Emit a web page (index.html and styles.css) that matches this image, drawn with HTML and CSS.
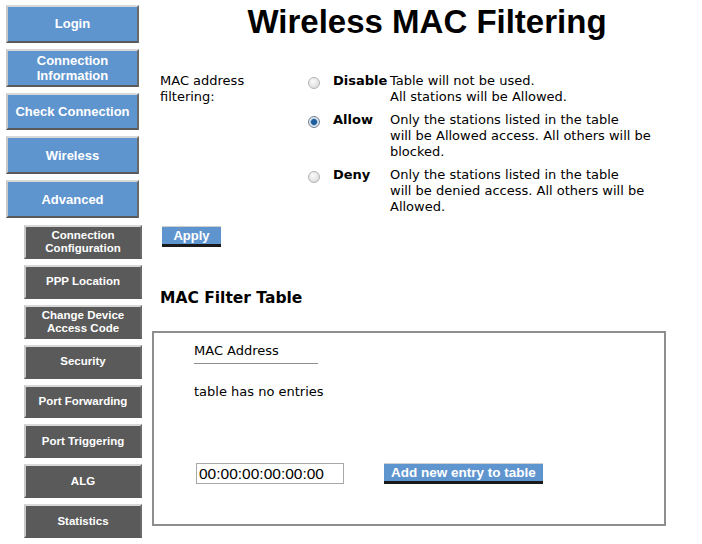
FILE: index.html
```html
<!DOCTYPE html>
<html>
<head>
<meta charset="utf-8">
<link rel="stylesheet" href="styles.css">
</head>
<body>
<div class="page">
  <nav class="sidebar">
    <a class="nav-main">Login</a>
    <a class="nav-main">Connection<br>Information</a>
    <a class="nav-main">Check Connection</a>
    <a class="nav-main">Wireless</a>
    <a class="nav-main">Advanced</a>
    <a class="nav-sub">Connection<br>Configuration</a>
    <a class="nav-sub">PPP Location</a>
    <a class="nav-sub">Change Device<br>Access Code</a>
    <a class="nav-sub">Security</a>
    <a class="nav-sub">Port Forwarding</a>
    <a class="nav-sub">Port Triggering</a>
    <a class="nav-sub">ALG</a>
    <a class="nav-sub">Statistics</a>
  </nav>
  <main class="content">
    <h1 class="title">Wireless MAC Filtering</h1>
    <div class="filter-form">
      <div class="field-label">MAC address<br>filtering:</div>
      <span class="radio"></span>
      <span class="opt-label">Disable</span>
      <div class="opt-desc">Table will not be used.<br>All stations will be Allowed.</div>

      <span class="radio checked"></span>
      <span class="opt-label">Allow</span>
      <div class="opt-desc">Only the stations listed in the table<br>will be Allowed access. All others will be<br>blocked.</div>

      <span class="radio"></span>
      <span class="opt-label">Deny</span>
      <div class="opt-desc">Only the stations listed in the table<br>will be denied access. All others will be<br>Allowed.</div>
    </div>
    <button class="btn btn-apply">Apply</button>
    <h2 class="section-title">MAC Filter Table</h2>
    <div class="table-box">
      <div class="col-head">MAC Address</div>
      <div class="empty">table has no entries</div>
      <div class="add-row">
        <input class="mac-input" type="text" value="00:00:00:00:00:00">
        <button class="btn btn-add">Add new entry to table</button>
      </div>
    </div>
  </main>
</div>
</body>
</html>
```

FILE: styles.css
```css
html, body {
  margin: 0;
  padding: 0;
  background: #fff;
}
body {
  font-family: "DejaVu Sans", Verdana, sans-serif;
  font-size: 13px;
  color: #000;
}
.page {
  display: flex;
  width: 702px;
  height: 544px;
  overflow: hidden;
}
.sidebar {
  width: 152px;
  flex: none;
  display: flex;
  flex-direction: column;
  padding: 5px 0 0 6px;
  box-sizing: border-box;
}
.nav-main, .nav-sub {
  display: flex;
  align-items: center;
  justify-content: center;
  text-align: center;
  color: #fff;
  font-family: "Liberation Sans", Arial, sans-serif;
  font-weight: bold;
  box-sizing: border-box;
  border-top: 2px solid #d8d8d8;
  border-left: 2px solid #c8c8c8;
  border-right: 2px solid #6a6a6a;
  border-bottom: 2px solid #5a5a5a;
}
.nav-main {
  width: 133px;
  height: 38px;
  margin-bottom: 6px;
  background: #5f95cf;
  font-size: 13px;
  line-height: 15px;
}
.nav-sub {
  width: 118px;
  height: 34px;
  margin: 0 0 6px 18px;
  background: #5a5a5a;
  font-size: 11.5px;
  line-height: 13px;
}
.nav-main:nth-child(5) { margin-bottom: 7px; }

.content {
  flex: 1;
  padding: 0;
}
.title {
  margin: 3px 0 0 0;
  text-align: center;
  font-family: "Liberation Sans", Arial, sans-serif;
  font-size: 33px;
  line-height: 38px;
  font-weight: bold;
}
.filter-form {
  display: grid;
  grid-template-columns: 148px 25px 57px auto;
  row-gap: 7px;
  margin: 32px 0 0 8px;
  line-height: 16px;
}
.field-label {
  grid-row: 1;
  grid-column: 1;
}
.radio {
  grid-column: 2;
  width: 12px;
  height: 12px;
  margin: 4px 0 0 0;
  border-radius: 50%;
  box-sizing: border-box;
  border: 1px solid #b4b4b4;
  background: radial-gradient(circle at 40% 35%, #fafafa 0%, #e4e4e4 60%, #cfcfcf 100%);
}
.radio.checked {
  border-color: #6f7f92;
  background: radial-gradient(circle, #1f5f9d 0 2.6px, #8fb6d8 3.2px, #e9eef3 4.2px, #c8d0d8 100%);
}
.opt-label {
  grid-column: 3;
  font-weight: bold;
}
.opt-desc {
  grid-column: 4;
}
.btn {
  font-family: "Liberation Sans", Arial, sans-serif;
  font-weight: bold;
  color: #fff;
  background: #5f95cf;
  border: none;
  border-top: 1px solid #cfcfcf;
  border-bottom: 3px solid #1a1a1a;
  padding: 0;
  box-sizing: border-box;
}
.btn-apply {
  display: block;
  margin: 11px 0 0 10px;
  width: 59px;
  height: 21px;
  font-size: 13px;
  line-height: 16px;
}
.section-title {
  margin: 42px 0 0 8px;
  font-size: 15.5px;
  line-height: 18px;
  font-weight: bold;
}
.table-box {
  margin: 24px 0 0 0;
  width: 514px;
  height: 195px;
  box-sizing: border-box;
  border: 2px solid #8e8e8e;
  padding: 10px 0 0 40px;
}
.col-head {
  width: 124px;
  padding-bottom: 4px;
  border-bottom: 1px solid #8e8e8e;
  line-height: 16px;
}
.empty {
  margin-top: 20px;
  line-height: 16px;
}
.add-row {
  display: flex;
  align-items: flex-start;
  gap: 40px;
  margin-top: 63px;
  padding-left: 2px;
}
.mac-input {
  width: 148px;
  height: 21px;
  box-sizing: border-box;
  border: 1px solid #a8a8a8;
  padding: 0 2px;
  margin: 0;
  font-family: "Liberation Sans", Arial, sans-serif;
  font-size: 15.5px;
  color: #000;
}
.btn-add {
  width: 159px;
  height: 21px;
  font-size: 13.5px;
  line-height: 16px;
}
```
